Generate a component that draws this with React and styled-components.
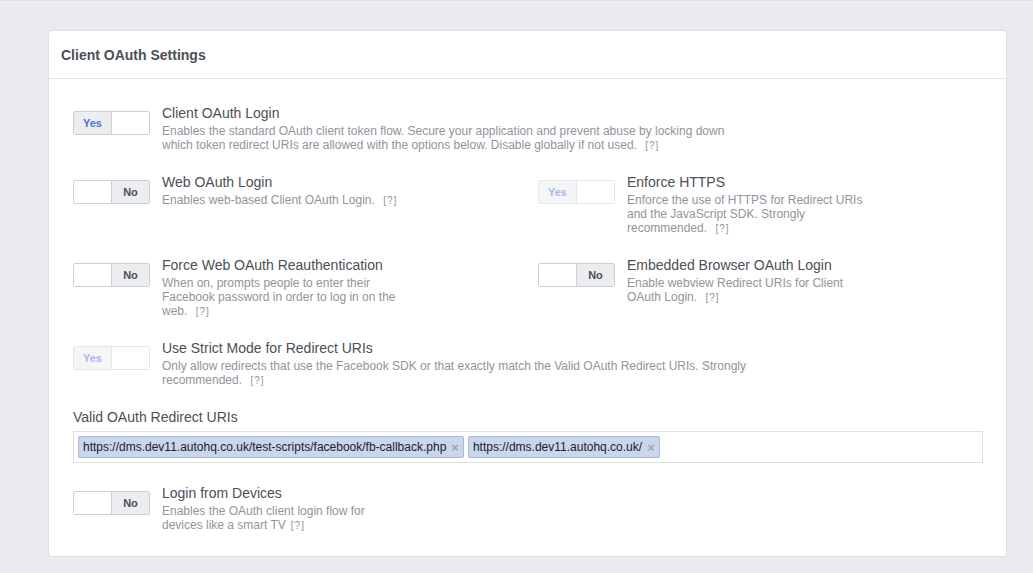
import React from 'react';
import styled, { createGlobalStyle } from 'styled-components';

const GlobalStyle = createGlobalStyle`
  html, body {
    margin: 0;
    padding: 0;
    background: #e9ebee;
    font-family: "Liberation Sans", Arial, Helvetica, sans-serif;
  }
  body {
    border-top: 1px solid #dddfe2;
  }
`;

const Page = styled.div`
  padding: 29px 26px 16px 48px;
`;

const Card = styled.div`
  background: #ffffff;
  border: 1px solid #dddfe2;
  border-radius: 3px;
  width: 957px;
`;

const CardHeader = styled.div`
  height: 47px;
  display: flex;
  align-items: center;
  padding-left: 12px;
  border-bottom: 1px solid #e5e5e5;
  font-size: 14px;
  font-weight: bold;
  color: #4b4f56;
`;

const CardBody = styled.div`
  padding: 25px 23px 24px 24px;
  display: flex;
  flex-direction: column;
  gap: 21px;
`;

const Row = styled.div`
  display: grid;
  grid-template-columns: 465px 1fr;
`;

const Item = styled.div`
  display: flex;
  align-items: flex-start;
  gap: 12px;
`;

const Toggle = styled.div`
  margin-top: 7px;
  flex: none;
  display: flex;
  width: 75px;
  height: 22px;
  border: 1px solid #ccd0d5;
  border-radius: 2px;
  overflow: hidden;
  opacity: ${p => (p.disabled ? 0.5 : 1)};
`;

const Half = styled.div`
  width: 38px;
  display: flex;
  align-items: center;
  justify-content: center;
  font-size: 11px;
  font-weight: bold;
  background: ${p => (p.on ? '#ebedf0' : '#ffffff')};
  color: ${p => (p.blue ? '#4f6fd6' : '#4b4f56')};
  & + & {
    border-left: 1px solid #ccd0d5;
  }
`;

const Text = styled.div`
  max-width: ${p => (p.wide ? '590px' : '240px')};
`;

const Title = styled.div`
  font-size: 14px;
  line-height: 18px;
  color: #4b4f56;
`;

const Desc = styled.div`
  margin-top: 2px;
  font-size: 12px;
  line-height: 14px;
  color: #90949c;
`;

const Help = styled.span`
  font-size: 10px;
  line-height: 1;
  margin-left: 5px;
  letter-spacing: 1px;
`;

const Field = styled.div`
  display: flex;
  flex-direction: column;
  gap: 5px;
`;

const Label = styled.div`
  font-size: 14px;
  line-height: 18px;
  color: #4b4f56;
`;

const TagInput = styled.div`
  height: 30px;
  border: 1px solid #dddfe2;
  display: flex;
  align-items: center;
  gap: 4px;
  padding: 0 4px;
`;

const Tag = styled.div`
  display: flex;
  align-items: center;
  gap: 5px;
  height: 20px;
  padding: 0 4px;
  background: #cad6ec;
  border: 1px solid #a5b8dc;
  border-radius: 2px;
  font-size: 12px;
  color: #1d2129;
`;

const Remove = styled.span`
  color: #a0a4ab;
  font-size: 13px;
  font-weight: bold;
`;

function Switch({ value, disabled }) {
  return (
    <Toggle disabled={disabled}>
      {value ? (
        <>
          <Half on blue>Yes</Half>
          <Half />
        </>
      ) : (
        <>
          <Half />
          <Half on>No</Half>
        </>
      )}
    </Toggle>
  );
}

function Setting({ title, desc, value, disabled, wide, sep = true }) {
  return (
    <Item>
      <Switch value={value} disabled={disabled} />
      <Text wide={wide}>
        <Title>{title}</Title>
        <Desc>
          {desc}
          {sep ? ' ' : ''}
          <Help>[?]</Help>
        </Desc>
      </Text>
    </Item>
  );
}

const uris = [
  'https://dms.dev11.autohq.co.uk/test-scripts/facebook/fb-callback.php',
  'https://dms.dev11.autohq.co.uk/',
];

export default function App() {
  return (
    <Page>
      <GlobalStyle />
      <Card>
        <CardHeader>Client OAuth Settings</CardHeader>
        <CardBody>
          <Setting
            wide
            value
            title="Client OAuth Login"
            desc="Enables the standard OAuth client token flow. Secure your application and prevent abuse by locking down which token redirect URIs are allowed with the options below. Disable globally if not used."
          />
          <Row>
            <Setting title="Web OAuth Login" desc="Enables web-based Client OAuth Login." />
            <Setting
              value
              disabled
              title="Enforce HTTPS"
              desc="Enforce the use of HTTPS for Redirect URIs and the JavaScript SDK. Strongly recommended."
            />
          </Row>
          <Row>
            <Setting
              title="Force Web OAuth Reauthentication"
              desc="When on, prompts people to enter their Facebook password in order to log in on the web."
            />
            <Setting
              title="Embedded Browser OAuth Login"
              desc="Enable webview Redirect URIs for Client OAuth Login."
            />
          </Row>
          <Setting
            wide
            value
            disabled
            title="Use Strict Mode for Redirect URIs"
            desc="Only allow redirects that use the Facebook SDK or that exactly match the Valid OAuth Redirect URIs. Strongly recommended."
          />
          <Field>
            <Label>Valid OAuth Redirect URIs</Label>
            <TagInput>
              {uris.map(u => (
                <Tag key={u}>
                  {u}
                  <Remove>×</Remove>
                </Tag>
              ))}
            </TagInput>
          </Field>
          <Setting
            sep={false}
            title="Login from Devices"
            desc="Enables the OAuth client login flow for devices like a smart TV"
          />
        </CardBody>
      </Card>
    </Page>
  );
}
